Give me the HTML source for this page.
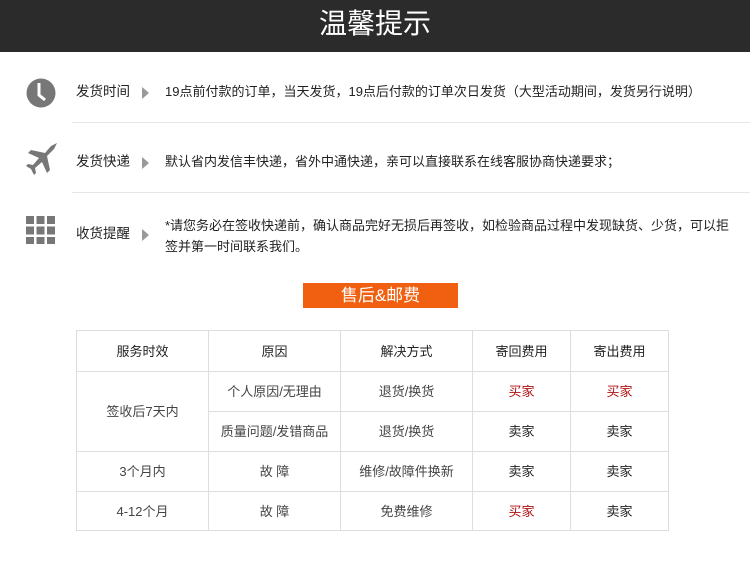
<!DOCTYPE html>
<html><head><meta charset="utf-8"><style>
body{margin:0;width:750px;height:584px;background:#fff;font-family:"Liberation Sans","Noto Sans CJK SC",sans-serif;color:#333;position:relative;overflow:hidden}
.hd{position:absolute;left:0;top:0;width:750px;height:52px;background:#2b2b2b;color:#fff;font-size:28px;text-align:center;line-height:48px}
.row{position:absolute;left:0;width:750px;font-size:13px}
.lab{position:absolute;left:76px;top:-3px;line-height:21px;color:#222;font-size:13.5px}
.arr{position:absolute;left:142px;width:0;height:0;border-left:7px solid #999;border-top:6px solid transparent;border-bottom:6px solid transparent}
.txt{position:absolute;left:165px;color:#222;line-height:21px}
.sep{position:absolute;left:72px;width:678px;height:1px;background:#e6e6e6}
.btn{position:absolute;left:303px;top:283px;width:155px;height:25px;background:#f06010;color:#fff;font-size:17px;text-align:center;line-height:25px}
table{position:absolute;left:76px;top:330px;border-collapse:collapse;font-size:13px}
td{border:1px solid #ddd;text-align:center;padding:0 0 2px;color:#444}
.r{color:#b01010}.k{color:#222}
</style></head><body>
<div class="hd">温馨提示</div>

<svg style="position:absolute;left:26px;top:78px" width="30" height="30" viewBox="0 0 30 30"><circle cx="15" cy="15" r="14.5" fill="#777"/><path d="M13 5v12l6 5" stroke="#fff" stroke-width="3" fill="none"/></svg>
<div class="row" style="top:84px"><span class="lab">发货时间</span><span class="arr" style="top:3px"></span><span class="txt" style="top:-3px">19点前付款的订单，当天发货，19点后付款的订单次日发货（大型活动期间，发货另行说明）</span></div>
<div class="sep" style="top:122px"></div>

<svg style="position:absolute;left:25px;top:142px" width="34" height="34" viewBox="0 0 34 34"><path d="M32 1 L26 4 L20 11 L6 8 L3 11 L14 16 L8 23 L3 22 L1 24 L6 27 L9 33 L11 31 L10 26 L17 20 L22 31 L25 28 L22 14 L29 7 Z" fill="#777"/></svg>
<div class="row" style="top:154px"><span class="lab">发货快递</span><span class="arr" style="top:3px"></span><span class="txt" style="top:-3px">默认省内发信丰快递，省外中通快递，亲可以直接联系在线客服协商快递要求；</span></div>
<div class="sep" style="top:192px"></div>

<svg style="position:absolute;left:26px;top:216px" width="30" height="30" viewBox="0 0 30 30" fill="#777"><rect x="0" y="0" width="8" height="8"/><rect x="10.5" y="0" width="8" height="8"/><rect x="21" y="0" width="8" height="8"/><rect x="0" y="10.5" width="8" height="8"/><rect x="10.5" y="10.5" width="8" height="8"/><rect x="21" y="10.5" width="8" height="8"/><rect x="0" y="21" width="8" height="7"/><rect x="10.5" y="21" width="8" height="7"/><rect x="21" y="21" width="8" height="7"/></svg>
<div class="row" style="top:226px"><span class="lab">收货提醒</span><span class="arr" style="top:3px"></span><span class="txt" style="top:-11px;width:570px">*请您务必在签收快递前，确认商品完好无损后再签收，如检验商品过程中发现缺货、少货，可以拒签并第一时间联系我们。</span></div>

<div class="btn">售后&amp;邮费</div>

<table>
<tr style="height:41px" class="k"><td style="width:131px" class="k">服务时效</td><td style="width:131px" class="k">原因</td><td style="width:131px" class="k">解决方式</td><td style="width:97px" class="k">寄回费用</td><td style="width:97px" class="k">寄出费用</td></tr>
<tr style="height:40px"><td rowspan="2">签收后7天内</td><td>个人原因/无理由</td><td>退货/换货</td><td class="r">买家</td><td class="r">买家</td></tr>
<tr style="height:40px"><td>质量问题/发错商品</td><td>退货/换货</td><td class="k">卖家</td><td class="k">卖家</td></tr>
<tr style="height:40px"><td>3个月内</td><td>故 障</td><td>维修/故障件换新</td><td class="k">卖家</td><td class="k">卖家</td></tr>
<tr style="height:39px"><td>4-12个月</td><td>故 障</td><td>免费维修</td><td class="r">买家</td><td class="k">卖家</td></tr>
</table>
</body></html>
